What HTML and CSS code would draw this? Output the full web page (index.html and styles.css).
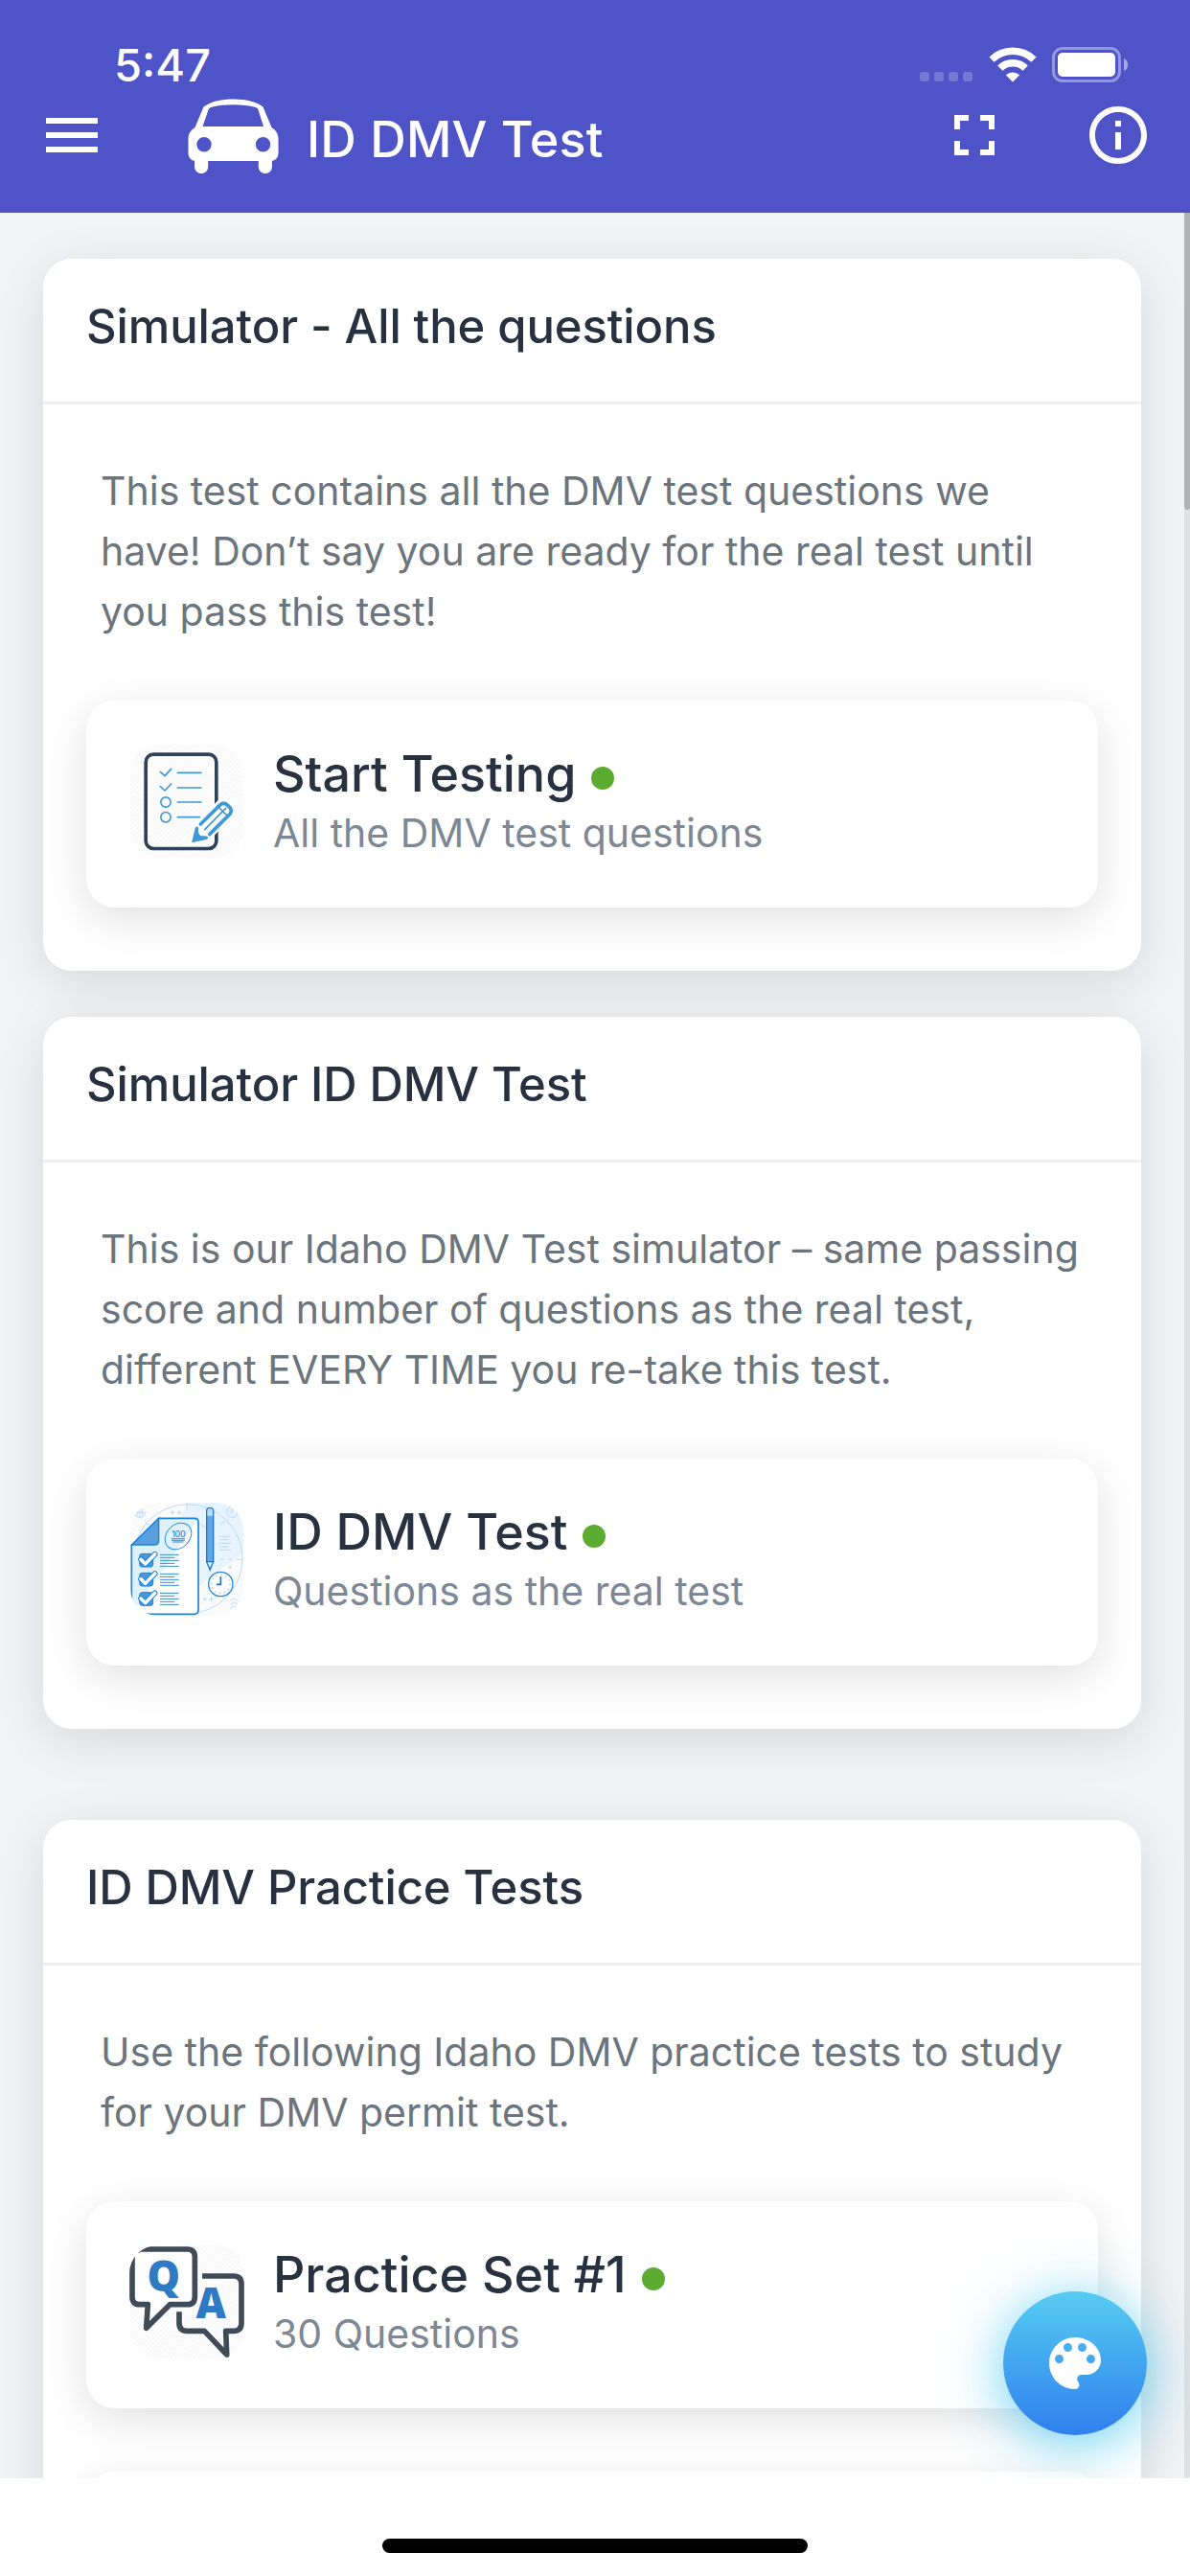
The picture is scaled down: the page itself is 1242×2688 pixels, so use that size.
FILE: index.html
```html
<!DOCTYPE html>
<html lang="en">
<head>
    <meta charset="UTF-8">
    <meta name="viewport" content="width=device-width, initial-scale=1.0">
    <title>ID DMV Test</title>
    <link rel="stylesheet" href="styles.css">
</head>
<body>
    <div class="screen">
        <header class="header">
            <div class="status-bar">
                <span class="time">5:47</span>
                <div class="status-icons">
                    <div class="cellular"><i></i><i></i><i></i><i></i></div>
                    <svg class="wifi" width="50" height="37" viewBox="0 0 50 37">
                        <g fill="none" stroke="#fff" stroke-width="7.4">
                            <path d="M3 13.2a31.5 31.5 0 0 1 44 0"/>
                            <path d="M11.8 22.2a18.8 18.8 0 0 1 26.4 0"/>
                        </g>
                        <path fill="#fff" d="M25 36.5l-7.2-7.2a10.5 10.5 0 0 1 14.4 0z"/>
                    </svg>
                    <svg class="battery" width="80" height="37" viewBox="0 0 80 37">
                        <rect x="1.5" y="1.5" width="69" height="34" rx="9.5" fill="none" stroke="#fff" stroke-opacity=".4" stroke-width="3"/>
                        <rect x="6" y="6" width="60" height="25" rx="5" fill="#fff"/>
                        <path d="M75 12c5.500 2 5.500 11 0 13z" fill="#fff" fill-opacity=".5"/>
                    </svg>
                </div>
            </div>
            <div class="toolbar">
                <svg class="menu-icon" width="54" height="36" viewBox="0 0 54 36">
                    <path fill="#fff" d="M0 0h54v6H0zM0 15h54v6H0zM0 30h54v6H0z"/>
                </svg>
                <svg class="car-icon" width="95" height="78" viewBox="0 0 95 78">
                    <path fill="#fff" fill-rule="evenodd" d="M16.500 8.500C25 2.500 35 .5 47.500 .5S70 2.500 78.500 8.500l9 21.500c4.500 3 7 6.500 7 12v14c0 5-2 8-6.500 8.800V71a7 7 0 0 1-14.200 0v-6H21.200v6A7 7 0 0 1 7 71v-6.200C2.500 64 .5 61 .5 56V42c0-5.500 2.500-9 7-12zM15.500 29h63.500l-5.500-17.500c-.5-1.700-1.500-2.300-3.500-2.800-14-3.200-31-3.200-45 0-2 .5-3 1.100-3.500 2.800zM17 40a7.700 7.700 0 1 0 0 15.400A7.700 7.700 0 0 0 17 40zM78.500 40a7.700 7.700 0 1 0 0 15.400 7.700 7.700 0 0 0 0-15.400z"/>
                </svg>
                <h1 class="app-title">ID DMV Test</h1>
                <svg class="fullscreen-icon" width="72" height="72" viewBox="0 0 24 24">
                    <path fill="#fff" d="M7 14H5v5h5v-2H7v-3zm-2-4h2V7h3V5H5v5zm12 7h-3v2h5v-5h-2v3zM14 5v2h3v3h2V5h-5z"/>
                </svg>
                <svg class="info-icon" width="72" height="72" viewBox="0 0 24 24">
                    <path fill="#fff" d="M11 7h2v2h-2zm0 4h2v6h-2zm1-9C6.480 2 2 6.480 2 12s4.480 10 10 10 10-4.480 10-10S17.520 2 12 2zm0 18c-4.410 0-8-3.590-8-8s3.590-8 8-8 8 3.590 8 8-3.590 8-8 8z"/>
                </svg>
            </div>
        </header>

        <main class="content">
            <section class="card">
                <h2>Simulator - All the questions</h2>
                <p>This test contains all the DMV test questions we<br>have! Don’t say you are ready for the real test until<br>you pass this test!</p>
                <div class="row">
                    <svg class="thumb" viewBox="45 78 360 360">
                        <defs>
                            <pattern id="hatch" width="10" height="10" patternUnits="userSpaceOnUse" patternTransform="rotate(45)">
                                <rect width="10" height="10" fill="#fefefe"/>
                                <rect width="3" height="10" fill="#f4f4f4"/>
                            </pattern>
                        </defs>
                        <rect x="48" y="81" width="354" height="354" rx="90" fill="url(#hatch)"/>
                        <rect x="96.500" y="111.500" width="221" height="295" rx="24" fill="none" stroke="#2f4157" stroke-width="11"/>
                        <g fill="none" stroke="#3e99d9" stroke-width="5" stroke-linecap="round" stroke-linejoin="round">
                            <path d="M142 166l14 13 20-22M142 212l14 13 20-21M196 169h74M196 216h74M196 261h74M196 308h69"/>
                            <circle cx="159" cy="261" r="15.500"/>
                            <circle cx="159" cy="308" r="15.500"/>
                        </g>
                        <path d="M241 387l15-52 72-72q14-14 31 4 18 15 6 31l-74 75z" fill="#fff" stroke="#fff" stroke-width="18"/>
                        <path d="M268 330l62-61q12-10 25 4 14 12 6 24l-65 65" fill="none" stroke="#3e99d9" stroke-width="11" stroke-linecap="round"/>
                        <path d="M321 273l31 31M281 347l66-67" stroke="#3e99d9" stroke-width="5" stroke-linecap="round"/>
                        <path d="M242 386l11-45q4-6 7 1-3 20 9 26l18 1q7 2 1 7z" fill="#3e99d9" stroke="#3e99d9" stroke-width="3"/>
                    </svg>
                    <div class="row-text">
                        <div class="row-title">Start Testing<span class="dot"></span></div>
                        <div class="row-sub">All the DMV test questions</div>
                    </div>
                </div>
            </section>

            <section class="card">
                <h2>Simulator ID DMV Test</h2>
                <p>This is our Idaho DMV Test simulator – same passing<br>score and number of questions as the real test,<br>different EVERY TIME you re-take this test.</p>
                <div class="row">
                    <svg class="thumb" viewBox="45 81 360 360">
                        <defs>
                            <clipPath id="round"><rect x="48" y="84" width="354" height="354" rx="85"/></clipPath>
                            <linearGradient id="paper" x1="0" y1="0" x2="1" y2="1">
                                <stop offset=".5" stop-color="#dff1fb"/>
                                <stop offset=".5" stop-color="#fff"/>
                            </linearGradient>
                        </defs>
                        <g clip-path="url(#round)">
                            <rect x="48" y="84" width="354" height="354" fill="url(#hatch)"/>
                            <path d="M232 84h170v158L262 345V160l-60-30z" fill="#e7f3fd"/>
                            <g fill="none" stroke="#bcd9f3" stroke-width="3">
                                <circle cx="228" cy="260" r="171"/>
                                <path d="M262 148a112 112 0 0 1 25 18M225 84v22M380 262h22M330 152l15-12M92 140l14 14"/>
                                <circle cx="367" cy="113" r="17"/>
                                <path d="M367 103v12l-9-3M60 115h34M78 97v36M66 102q12 12 0 26M90 102q-12 12 0 26M96 112a18 18 0 1 1-36 0"/>
                                <path d="M173 115h14M180 108v14M194 115h14M201 108v14M275 386h14M282 379v14M295 386h14M302 379v14M354 286h12M360 280v12M328 261h12M354 261h12"/>
                                <path d="M327 190h32M327 200h26M327 211h35M327 222h28M327 232h35M361 391l12-8 12 8M361 403l12-8 12 8M361 415l12-8 12 8"/>
                            </g>
                            <path d="M137 133h112q12 0 12 12v275q0 13-13 13H65q-13 0-13-13V217z" fill="url(#paper)" stroke="#1b83d8" stroke-width="5"/>
                            <path d="M137 133v70q0 13-13 13H53z" fill="#5aa0df" stroke="#1b83d8" stroke-width="4"/>
                            <g fill="none" stroke="#2f8fdb" stroke-width="3">
                                <ellipse cx="198" cy="189" rx="46" ry="36" transform="rotate(-45 198 189)"/>
                                <path d="M177 197h42M177 202h42M181 207h34"/>
                                <path d="M141 247h59M141 256h46M141 265h59M141 274h46M141 283h59M141 307h59M141 316h46M141 325h59M141 334h46M141 343h59M141 367h59M141 376h46M141 385h59M141 394h46M141 403h59"/>
                            </g>
                            <text class="score" x="199" y="193" text-anchor="middle">100</text>
                            <g fill="#4a98db" stroke="#1b83d8" stroke-width="3">
                                <rect x="77" y="244" width="42" height="41" rx="8"/>
                                <rect x="77" y="304" width="42" height="41" rx="8"/>
                                <rect x="77" y="365" width="42" height="41" rx="8"/>
                            </g>
                            <g fill="none" stroke="#1b83d8" stroke-width="17" stroke-linecap="round" stroke-linejoin="round">
                                <path d="M81 262l14 14 30-31M81 323l14 14 30-31M81 384l14 14 30-31"/>
                            </g>
                            <g fill="none" stroke="#fff" stroke-width="11" stroke-linecap="round" stroke-linejoin="round">
                                <path d="M81 262l14 14 30-31M81 323l14 14 30-31M81 384l14 14 30-31"/>
                            </g>
                            <path d="M287 110q0-10 10.500-10t10.500 10v159h-21z" fill="#62a7e3" stroke="#1b78d0" stroke-width="4"/>
                            <path d="M289 110q0-8 8.500-8t8.500 8v15h-17z" fill="#b8dcf5"/>
                            <path d="M287 269h21l-10.500 26z" fill="#d9eefb" stroke="#1b78d0" stroke-width="4"/>
                            <path d="M294 286h7l-3.500 9z" fill="#1b78d0"/>
                            <circle cx="331" cy="339" r="38" fill="#fff" stroke="#2787d8" stroke-width="4"/>
                            <circle cx="331" cy="339" r="29" fill="none" stroke="#2787d8" stroke-width="3" stroke-dasharray="3 12.180"/>
                            <path d="M331 315v25h-14" fill="none" stroke="#1b78d0" stroke-width="5"/>
                        </g>
                    </svg>
                    <div class="row-text">
                        <div class="row-title">ID DMV Test<span class="dot"></span></div>
                        <div class="row-sub">Questions as the real test</div>
                    </div>
                </div>
            </section>

            <section class="card practice">
                <h2>ID DMV Practice Tests</h2>
                <p>Use the following Idaho DMV practice tests to study<br>for your DMV permit test.</p>
                <div class="row">
                    <svg class="thumb" viewBox="45 96 360 360">
                        <defs>
                            <clipPath id="roundQa"><rect x="45" y="99" width="360" height="354" rx="88"/></clipPath>
                        </defs>
                        <g clip-path="url(#roundQa)">
                            <rect x="48" y="99" width="354" height="354" fill="url(#hatch)"/>
                            <path d="M54 135q0-24 24-24h148q24 0 24 24v125q0 24-24 24h-54l-74 74 5-74H78q-24 0-24-24z" fill="#fff"/>
                            <path d="M68 118q6-7 20-7h138q24 0 24 24v125q0 24-24 24h-54l-74 74 5-74H78q-24 0-24-24V135" fill="none" stroke="#3f4b57" stroke-width="17" stroke-linejoin="round"/>
                        </g>
                        <path d="M273 195h98q25 0 25 25v122q0 25-25 25h-24l3 74-70-74h-54q-25 0-25-25v-35" fill="none" stroke="#3f4b57" stroke-width="17" stroke-linejoin="round"/>
                        <text class="qa-letter" x="152" y="243" text-anchor="middle">Q</text>
                        <text class="qa-letter" x="301" y="328" text-anchor="middle">A</text>
                    </svg>
                    <div class="row-text">
                        <div class="row-title">Practice Set #1<span class="dot"></span></div>
                        <div class="row-sub">30 Questions</div>
                    </div>
                </div>
                <div class="row"></div>
            </section>

            <div class="scrollbar"><div class="scrollbar-thumb"></div></div>
            <button class="fab" aria-label="Theme">
                <svg width="72" height="72" viewBox="0 0 24 24">
                    <path fill="#fff" d="M12 3c-4.970 0-9 4.030-9 9s4.030 9 9 9c.83 0 1.500-.67 1.500-1.500 0-.39-.15-.74-.39-1.010-.23-.26-.38-.61-.38-.99 0-.83.67-1.500 1.500-1.500H16c2.760 0 5-2.240 5-5 0-4.420-4.030-8-9-8zm-5.500 9c-.83 0-1.500-.67-1.500-1.500S5.670 9 6.500 9 8 9.670 8 10.500 7.330 12 6.500 12zm3-4C8.670 8 8 7.330 8 6.500S8.670 5 9.500 5s1.500.67 1.500 1.500S10.330 8 9.500 8zm5 0c-.83 0-1.500-.67-1.500-1.500S13.670 5 14.500 5s1.500.67 1.500 1.500S15.330 8 14.500 8zm3 4c-.83 0-1.500-.67-1.500-1.500S16.670 9 17.500 9s1.500.67 1.500 1.500-.67 1.500-1.500 1.500z"/>
                </svg>
            </button>
        </main>

        <footer class="home-area"><div class="home-indicator"></div></footer>
    </div>
</body>
</html>
```
FILE: styles.css
```css
:root {
    --primary-color: #4e54c8;
    --page-color: #f2f3f5;
    --dark-color: #283140;
    --text-color: #6c757d;
    --muted-color: #7d8795;
    --green-color: #5aab2f;
}

* {
    box-sizing: border-box;
    margin: 0;
    padding: 0;
}

body {
    font-family: Inter, "Liberation Sans", sans-serif;
    background: #fff;
    color: var(--dark-color);
}

svg {
    display: block;
    flex-shrink: 0;
}

.screen {
    width: 1242px;
    height: 2688px;
    display: flex;
    flex-direction: column;
    overflow: hidden;
}

/* header */
.header {
    flex-shrink: 0;
    height: 222px;
    background: var(--primary-color);
    color: #fff;
}

.status-bar {
    height: 99px;
    padding: 36px 64px 0 119px;
    display: flex;
    justify-content: space-between;
    align-items: center;
}

.time {
    font-size: 47px;
    font-weight: 550;
}

.status-icons {
    display: flex;
    align-items: flex-end;
}

.cellular {
    display: flex;
    gap: 5px;
    margin: 0 17px 1px 0;
}

.cellular i {
    width: 10px;
    height: 10px;
    border-radius: 3px;
    background: rgba(255, 255, 255, 0.22);
}

.wifi {
    margin-right: 16px;
}

.toolbar {
    height: 84px;
    padding: 0 39px 0 48px;
    display: flex;
    align-items: center;
}

.car-icon {
    margin: 1px 29px 0 94px;
}

.app-title {
    flex: 1;
    padding-top: 9px;
    font-size: 52px;
    font-weight: 550;
    line-height: 62px;
    letter-spacing: 0.2px;
}

.fullscreen-icon {
    margin-right: 78px;
}

/* content */
.content {
    flex: 1;
    min-height: 0;
    position: relative;
    padding: 48px 51px 0 45px;
    background: var(--page-color);
    overflow: hidden;
}

.card {
    margin-bottom: 48px;
    border-radius: 30px;
    background: #fff;
    box-shadow: 0 12px 54px rgba(0, 0, 0, 0.11);
    overflow: hidden;
}

.card.practice {
    margin-top: 95px;
}

.card h2 {
    padding: 41px 45px 48px;
    border-bottom: 3px solid #efefef;
    font-size: 49px;
    font-weight: 500;
    line-height: 60px;
    letter-spacing: -0.1px;
}

.card p {
    padding: 59px 60px 61px;
    color: var(--text-color);
    font-size: 41px;
    line-height: 63px;
    white-space: nowrap;
}

.row {
    height: 216px;
    margin: 0 45px 66px;
    padding: 45px 45px 0;
    display: flex;
    align-items: flex-start;
    gap: 30px;
    border-radius: 30px;
    background: #fff;
    box-shadow: 0 12px 45px rgba(0, 0, 0, 0.12);
}

.thumb {
    width: 120px;
    height: 120px;
}

.row-text {
    padding-top: 1px;
    white-space: nowrap;
}

.row-title {
    display: flex;
    align-items: center;
    font-size: 52px;
    font-weight: 500;
    line-height: 62px;
}

.dot {
    width: 24px;
    height: 24px;
    margin: 8px 0 0 16px;
    border-radius: 50%;
    background: var(--green-color);
}

.row-sub {
    color: var(--muted-color);
    font-size: 41px;
    line-height: 60px;
}

.score {
    fill: #2f8fdb;
    font-size: 27px;
    font-weight: 500;
    letter-spacing: -1px;
}

.qa-letter {
    fill: #2e7bc4;
    font-family: "Open Sans", "Noto Sans", sans-serif;
    font-size: 130px;
    font-weight: 800;
}

.scrollbar {
    position: absolute;
    top: 0;
    right: 0;
    width: 6px;
    height: 100%;
    background: #dfe0e1;
    border-radius: 0 0 3px 3px;
}

.scrollbar-thumb {
    height: 310px;
    background: #b1b2b4;
    border-radius: 0 0 3px 3px;
}

.fab {
    position: absolute;
    right: 45px;
    bottom: 45px;
    width: 150px;
    height: 150px;
    display: flex;
    align-items: center;
    justify-content: center;
    border: none;
    border-radius: 50%;
    background: linear-gradient(#56ccf2, #2f80ed);
    box-shadow: 0 9px 60px rgba(86, 204, 242, 0.9);
}

.home-area {
    flex-shrink: 0;
    height: 102px;
    padding-top: 63px;
    background: #fff;
}

.home-indicator {
    width: 444px;
    height: 15px;
    margin: 0 auto;
    border-radius: 8px;
    background: #000;
}
```
